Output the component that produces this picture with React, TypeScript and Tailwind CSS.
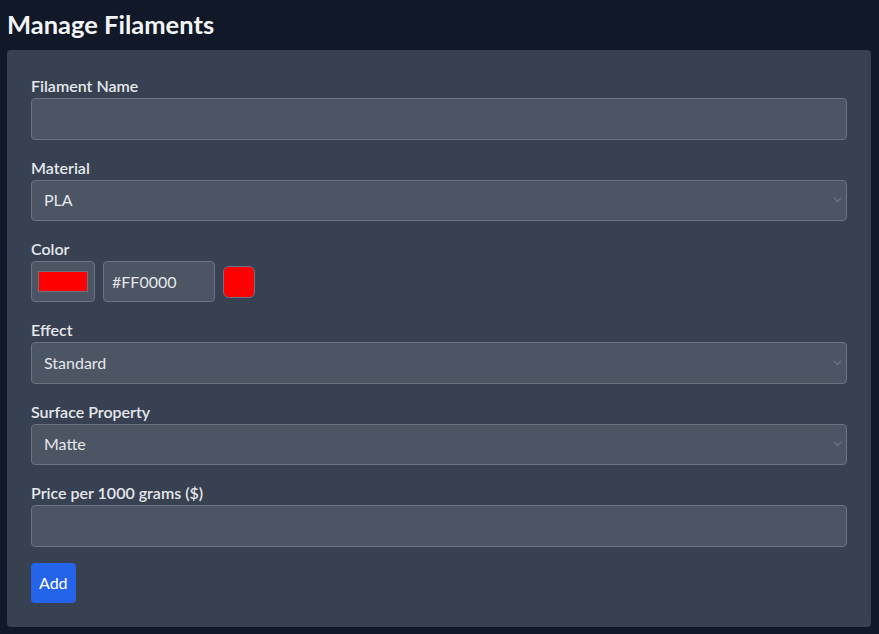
import React, { useState } from "react";

const labelCls = "block text-base font-semibold text-[#e5e7eb]";
const fieldCls =
  "w-full h-[41.5px] px-3 rounded bg-[#4b5563] border border-[#6b7280] text-base text-[#e5e7eb] outline-none";

function Chevron() {
  return (
    <svg
      className="pointer-events-none absolute right-[5px] top-1/2 -translate-y-1/2"
      width="9"
      height="6"
      viewBox="0 0 9 6"
      fill="none"
    >
      <path d="M1 1l3.5 3.5L8 1" stroke="#6b7280" strokeWidth="1.4" />
    </svg>
  );
}

function SelectField({ label, value, options }: { label: string; value: string; options: string[] }) {
  return (
    <div className="mb-4">
      <label className={labelCls}>{label}</label>
      <div className="relative">
        <select defaultValue={value} className={fieldCls + " appearance-none"}>
          {options.map((o) => (
            <option key={o}>{o}</option>
          ))}
        </select>
        <Chevron />
      </div>
    </div>
  );
}

export default function App() {
  const [hex, setHex] = useState("#FF0000");

  return (
    <div
      className="min-h-screen bg-[#111827] pl-[7px] pr-2 pt-2 pb-2"
      style={{ fontFamily: 'Lato, "Open Sans", sans-serif' }}
    >
      <h1 className="text-[25.5px] font-bold text-[#f3f4f6] leading-8 mb-[10px]">Manage Filaments</h1>

      <div className="bg-[#374151] rounded p-6">
        <div className="mb-4">
          <label className={labelCls}>Filament Name</label>
          <input type="text" className={fieldCls} />
        </div>

        <SelectField label="Material" value="PLA" options={["PLA", "PETG", "ABS", "TPU"]} />

        <div className="mb-4">
          <label className={labelCls}>Color</label>
          <div className="flex items-center gap-2">
            <div className="w-16 h-[41px] rounded bg-[#4b5563] border border-[#6b7280] flex items-center justify-center">
              <div className="w-[50px] h-[21px] bg-[#ff0000] border border-[#6b7280]" />
            </div>
            <input
              type="text"
              value={hex}
              onChange={(e) => setHex(e.target.value)}
              className="w-28 h-[41px] px-2 rounded bg-[#4b5563] border border-[#6b7280] text-base text-[#e5e7eb] outline-none"
            />
            <div className="w-8 h-8 rounded-md bg-[#ff0000] border border-[#6b7280]" />
          </div>
        </div>

        <SelectField label="Effect" value="Standard" options={["Standard", "Silk", "Glitter", "Marble"]} />
        <SelectField label="Surface Property" value="Matte" options={["Matte", "Glossy", "Satin"]} />

        <div className="mb-4">
          <label className={labelCls}>Price per 1000 grams ($)</label>
          <input type="number" className={fieldCls} />
        </div>

        <button className="h-10 px-2 rounded bg-[#2563eb] text-base text-white">Add</button>
      </div>
    </div>
  );
}
